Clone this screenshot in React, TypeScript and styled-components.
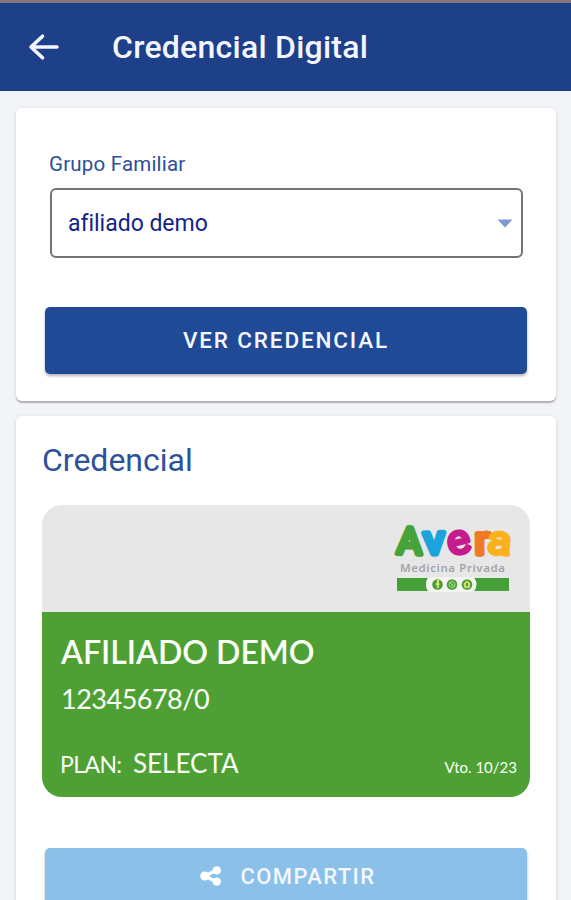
import React from 'react';
import styled, { createGlobalStyle } from 'styled-components';

const GlobalStyle = createGlobalStyle`
  * { box-sizing: border-box; }
  html, body { margin: 0; padding: 0; }
  body { background: #f3f4f7; font-family: Roboto, sans-serif; overflow: hidden; }
`;

const Screen = styled.div`
  display: flex;
  flex-direction: column;
  height: 900px;
  overflow: hidden;
  background: #f3f4f7;
`;

const Header = styled.header`
  display: flex;
  align-items: center;
  flex: none;
  height: 91px;
  padding: 0 28px 1px;
  border-top: 3px solid #81777c;
  background: #1e4088;
`;

const BackButton = styled.button`
  display: flex;
  width: 32px;
  height: 28px;
  padding: 0;
  border: 0;
  background: none;
`;

const Title = styled.h1`
  margin: 0 0 0 52px;
  color: #f3f5ff;
  font-size: 32px;
  font-weight: 500;
  line-height: 38px;
  letter-spacing: 0.25px;
  white-space: nowrap;
`;

const Content = styled.main`
  display: flex;
  flex-direction: column;
  gap: 15px;
  padding: 17px 15px 0 16px;
`;

const Panel = styled.section<{ $height: number; $pad: string }>`
  display: flex;
  flex-direction: column;
  flex: none;
  height: ${(p) => p.$height}px;
  padding: ${(p) => p.$pad};
  border-radius: 6px;
  background: #fff;
  box-shadow: 0 2px 1px rgba(0, 0, 0, 0.22), 0 1px 4px rgba(0, 0, 0, 0.12);
`;

const FieldLabel = styled.label`
  margin: 0 4px;
  color: #2b4f97;
  font-size: 20.5px;
  line-height: 24px;
  letter-spacing: 0.2px;
`;

const Select = styled.div`
  display: flex;
  align-items: center;
  justify-content: space-between;
  height: 70px;
  margin: 12px 4px 0 5px;
  padding: 0 8px 0 16px;
  border: 2px solid #747474;
  border-radius: 6px;
  color: #13248a;
  font-size: 23px;
  letter-spacing: -0.02px;
`;

const Button = styled.button<{ $light?: boolean; $top: number }>`
  display: flex;
  align-items: center;
  justify-content: center;
  gap: 19px;
  flex: none;
  height: ${(p) => (p.$light ? 58 : 67)}px;
  margin: ${(p) => p.$top}px 0 0;
  padding: 0 0 2px ${(p) => (p.$light ? 3 : 0)}px;
  border: 0;
  border-radius: 5px;
  color: #f4f7ff;
  background: ${(p) => (p.$light ? '#8bc1e9' : '#204a96')};
  box-shadow: 0 2px 3px rgba(0, 0, 0, 0.3);
  font: 500 ${(p) => (p.$light ? 22 : 22.5)}px Roboto, sans-serif;
  letter-spacing: ${(p) => (p.$light ? 1.4 : 1.85)}px;
`;

const Heading = styled.h2`
  margin: 0 0 26px -3px;
  color: #2d519b;
  font-size: 32px;
  font-weight: 400;
  line-height: 38px;
`;

const Credential = styled.article`
  flex: none;
  width: 488px;
  height: 292px;
  margin-left: -3px;
  overflow: hidden;
  border-radius: 20px;
  background: linear-gradient(#e7e7e7 107px, #4ea034 107px);
  color: #fafff7;
  font-family: Lato, sans-serif;
`;

const CardTop = styled.div`
  display: flex;
  justify-content: flex-end;
  height: 107px;
  padding: 3px 16px 0 0;
`;

const CardBody = styled.div`
  display: flex;
  flex-direction: column;
  padding: 20px 13px 0 18px;
`;

const MemberName = styled.div`
  margin-left: 1px;
  font-size: 32px;
  font-weight: 600;
  line-height: 40px;
  white-space: nowrap;
`;

const MemberNumber = styled.div`
  margin: 11px 0 0 1px;
  font-size: 27px;
  line-height: 32px;
  letter-spacing: -0.5px;
`;

const PlanRow = styled.div`
  display: flex;
  align-items: baseline;
  margin-top: 32px;
  line-height: 32px;
`;

const PlanLabel = styled.span`
  width: 73px;
  font-size: 23px;
  letter-spacing: -0.6px;
`;

const PlanValue = styled.span`
  font-size: 26px;
`;

const Expiry = styled.span`
  margin-left: auto;
  font-size: 15px;
`;

const ArrowLeft = () => (
  <svg width="32" height="28" viewBox="0 0 32 28" fill="none" stroke="#f3f5ff" strokeWidth="3.6" strokeLinecap="round" strokeLinejoin="round">
    <path d="M29 14H3M14.5 3.2 3 14l11.5 10.8" />
  </svg>
);

const Caret = () => (
  <svg width="16" height="9" viewBox="0 0 16 9">
    <path d="M0.5 0.5h15L8 8.5Z" fill="#8296cf" />
  </svg>
);

const ShareIcon = () => (
  <svg width="22" height="20" viewBox="0 0 22 20" fill="#fff">
    <path d="M17 4 5 10l12 6" fill="none" stroke="#fff" strokeWidth="3.6" />
    <circle cx="4.7" cy="10" r="4.5" />
    <circle cx="16.8" cy="4.4" r="4.2" />
    <circle cx="16.8" cy="15.6" r="4.2" />
  </svg>
);

const LETTERS = [
  { ch: 'A', x: 17.5, y: 36, size: 37, color: '#45a33a', turn: 2, w: 25, stroke: 5 },
  { ch: 'v', x: 42, y: 36, size: 40, color: '#1ba4dc', turn: -2, w: 21, stroke: 5.4 },
  { ch: 'e', x: 66.5, y: 35.5, size: 41, color: '#c51b8c', turn: -14, w: 23, stroke: 3.8 },
  { ch: 'r', x: 90, y: 36, size: 39, color: '#ee7a25', turn: -1, w: 15, stroke: 5 },
  { ch: 'a', x: 107.5, y: 36, size: 40, color: '#fbb11c', turn: 5, w: 24, stroke: 3.8 },
];

const AveraLogo = () => (
  <svg width="122" height="88" viewBox="0 -10 122 88">
    {LETTERS.map((l) => (
      <text
        key={l.ch}
        x={l.x}
        y={l.y}
        transform={`rotate(${l.turn} ${l.x} ${l.y - 12})`}
        fill={l.color}
        stroke={l.color}
        strokeWidth={l.stroke}
        strokeLinejoin="round"
        textAnchor="middle"
        textLength={l.w}
        lengthAdjust="spacingAndGlyphs"
        fontFamily="Roboto, sans-serif"
        fontWeight="400"
        fontSize={l.size}
      >
        {l.ch}
      </text>
    ))}
    <text x="8" y="54" fill="#a4a4a7" fontFamily="Noto Sans, sans-serif" fontWeight="600" fontSize="11.5" textLength="105">
      Medicina Privada
    </text>
    <path d="M5 60H36Q32 66 36 73H5ZM82 60H117V73H82Q87 66 82 60Z" fill="#45a137" />
    <path d="M36 60Q38 59 41 59H77Q80 59 82 60Q87 66 82 73Q80 74 77 74H41Q38 74 36 73Q32 66 36 60Z" fill="#f4f5f1" />
    {[45.5, 60, 75].map((cx) => (
      <circle key={cx} cx={cx} cy="66.500" r="5.300" fill="#45a137" />
    ))}
    <path d="M47 63h-1.200v7M43.800 66.200h3.700" stroke="#f1e46c" strokeWidth="1.800" fill="none" />
    <circle cx="60" cy="66.500" r="3" stroke="#b5d48b" fill="none" />
    <path d="m58.500 65 3 3" stroke="#b5d48b" strokeWidth="1.300" />
    <path d="m71.800 66.500 3.200-3 3.200 3M73 66v3h4v-3" stroke="#f1e46c" strokeWidth="1.500" fill="none" />
  </svg>
);

export default function App() {
  return (
    <>
      <GlobalStyle />
      <Screen>
        <Header>
          <BackButton aria-label="Volver"><ArrowLeft /></BackButton>
          <Title>Credencial Digital</Title>
        </Header>
        <Content>
          <Panel $height={293} $pad="44px 29px 0">
            <FieldLabel>Grupo Familiar</FieldLabel>
            <Select>
              <span>afiliado demo</span>
              <Caret />
            </Select>
            <Button $top={49}>VER CREDENCIAL</Button>
          </Panel>
          <Panel $height={540} $pad="25px 29px 0">
            <Heading>Credencial</Heading>
            <Credential>
              <CardTop><AveraLogo /></CardTop>
              <CardBody>
                <MemberName>AFILIADO DEMO</MemberName>
                <MemberNumber>12345678/0</MemberNumber>
                <PlanRow>
                  <PlanLabel>PLAN:</PlanLabel>
                  <PlanValue>SELECTA</PlanValue>
                  <Expiry>Vto. 10/23</Expiry>
                </PlanRow>
              </CardBody>
            </Credential>
            <Button $light $top={51}><ShareIcon />COMPARTIR</Button>
          </Panel>
        </Content>
      </Screen>
    </>
  );
}
